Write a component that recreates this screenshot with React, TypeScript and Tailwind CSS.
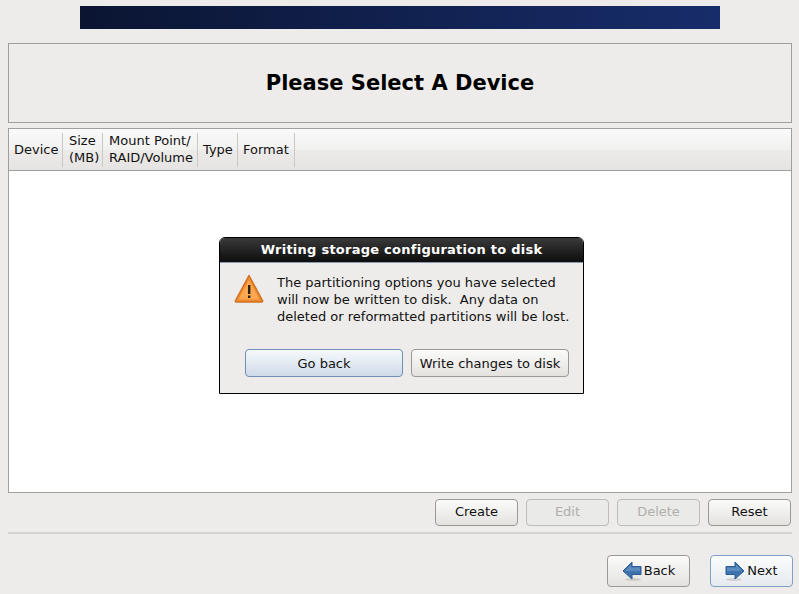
import React from "react";

const Column = ({ children, width }: { children: React.ReactNode; width: string }) => (
  <div className={`flex h-[34px] items-center border-r border-[#c9c8c4] pb-[1px] leading-[17px] ${width}`}>
    <span>{children}</span>
  </div>
);

const ActionButton = ({ label, disabled }: { label: string; disabled?: boolean }) => (
  <button
    className={`flex h-[27px] w-[83px] items-center justify-center rounded-[4px] border pb-[1px] ${
      disabled
        ? "border-[#bdbcb8] bg-[#eaeae8] text-[#b0afab]"
        : "border-[#9a9994] bg-gradient-to-b from-[#fbfbfa] to-[#e3e2df] text-[#111111]"
    }`}
  >
    {label}
  </button>
);

const ArrowIcon = ({ flip }: { flip?: boolean }) => (
  <svg width="20" height="22" viewBox="0 0 20 22" className={flip ? "-scale-x-100" : ""}>
    <ellipse cx="9" cy="19.500" rx="8" ry="1.500" fill="#000" opacity="0.12" />
    <path d="M1 6.500h9V2l9 9-9 8v-4.500H1z" fill="#3f73ae" stroke="#2a5a94" strokeWidth="1" strokeLinejoin="round" />
    <path d="M2 7.500h9V4.500l6 6.500H2z" fill="#6f9bcc" opacity="0.6" />
  </svg>
);

const WarningIcon = () => (
  <svg width="30" height="30" viewBox="0 0 30 30">
    <path d="M15 1.500 28.500 26.500a1 1 0 0 1-1 1.500H2.500a1 1 0 0 1-1-1.500z" fill="#f08a2c" stroke="#cf7222" strokeWidth="1.500" strokeLinejoin="round" />
    <path d="M15 6 25.500 25.500H4.500z" fill="#fba850" />
    <rect x="14" y="11" width="2.400" height="9" fill="#2a2118" />
    <rect x="14" y="21.500" width="2.400" height="2.500" fill="#2a2118" />
  </svg>
);

export default function App() {
  return (
    <div className="relative flex h-[594px] w-[799px] flex-col overflow-hidden bg-[#edecea] pt-[6px] font-['DejaVu_Sans',sans-serif] text-[13px] text-[#111111]">
      {/* Banner */}
      <div className="mx-[80px] h-[23px] w-[640px] shrink-0 bg-gradient-to-r from-[#0b1532] via-[#11214f] to-[#172c6a]" />

      {/* Title */}
      <div className="ml-[8px] mt-[14px] flex h-[80px] w-[784px] shrink-0 items-center justify-center border border-[#a09f9b] pt-[2px] text-[21px] font-bold text-black">
        Please Select A Device
      </div>

      {/* Table */}
      <div className="ml-[8px] mt-[5px] flex h-[365px] w-[784px] shrink-0 flex-col border border-[#a09f9b] bg-white">
        <div className="flex h-[42px] shrink-0 items-center border-b border-[#a09f9b] bg-[linear-gradient(to_bottom,#fafafa_0%,#f1f1f0_50%,#ecebe9_52%,#e5e4e2_100%)]">
          <Column width="w-[54px] pl-[5px]">Device</Column>
          <Column width="w-[40px] pl-[6px]">
            Size
            <br />
            (MB)
          </Column>
          <Column width="w-[95px] pl-[6px]">
            Mount Point/
            <br />
            RAID/Volume
          </Column>
          <Column width="w-[40px] pl-[5px]">Type</Column>
          <Column width="w-[57px] pl-[5px]">Format</Column>
        </div>
      </div>

      {/* Device actions */}
      <div className="mt-[6px] flex h-[27px] shrink-0 justify-end gap-[8px] pr-[8px]">
        <ActionButton label="Create" />
        <ActionButton label="Edit" disabled />
        <ActionButton label="Delete" disabled />
        <ActionButton label="Reset" />
      </div>

      <div className="ml-[8px] mt-[6px] h-[2px] w-[784px] shrink-0 bg-[#d3d2cd]" />

      {/* Nav */}
      <div className="mt-[21px] flex h-[32px] shrink-0 justify-end gap-[20px] pr-[6px]">
        <button className="flex h-[32px] w-[83px] items-center justify-center gap-[2px] rounded-[4px] border border-[#9a9994] bg-gradient-to-b from-[#fbfbfa] to-[#e3e2df] pb-[1px]">
          <ArrowIcon flip />
          Back
        </button>
        <button className="flex h-[32px] w-[83px] items-center justify-center gap-[2px] rounded-[4px] border border-[#7f9fc4] bg-gradient-to-b from-[#fbfcfd] to-[#e6eaef] pb-[1px]">
          <ArrowIcon />
          Next
        </button>
      </div>

      {/* Confirm dialog */}
      <div className="absolute left-[219px] top-[237px] flex h-[157px] w-[365px] flex-col overflow-hidden rounded-t-[6px] border border-black bg-[#edecea]">
        <div className="flex h-[25px] shrink-0 items-center justify-center border-b border-[#8d9bb0] bg-gradient-to-b from-[#3a3a3a] to-[#0e0e0e] font-bold tracking-[0.25px] text-white">
          Writing storage configuration to disk
        </div>
        <div className="flex gap-[13px] pl-[14px] pt-[11px]">
          <WarningIcon />
          <p className="leading-[17px]">
            The partitioning options you have selected
            <br />
            will now be written to disk.&nbsp; Any data on
            <br />
            deleted or reformatted partitions will be lost.
          </p>
        </div>
        <div className="mt-[24px] flex gap-[8px] pl-[25px]">
          <button className="h-[28px] w-[158px] rounded-[4px] border border-[#6f8fb5] bg-gradient-to-b from-[#f6f9fc] to-[#cfdbe8] pt-[1px]">
            Go back
          </button>
          <button className="h-[28px] w-[158px] rounded-[4px] border border-[#9a9994] bg-gradient-to-b from-[#fbfbfa] to-[#e3e2df] pt-[1px]">
            Write changes to disk
          </button>
        </div>
      </div>
    </div>
  );
}
